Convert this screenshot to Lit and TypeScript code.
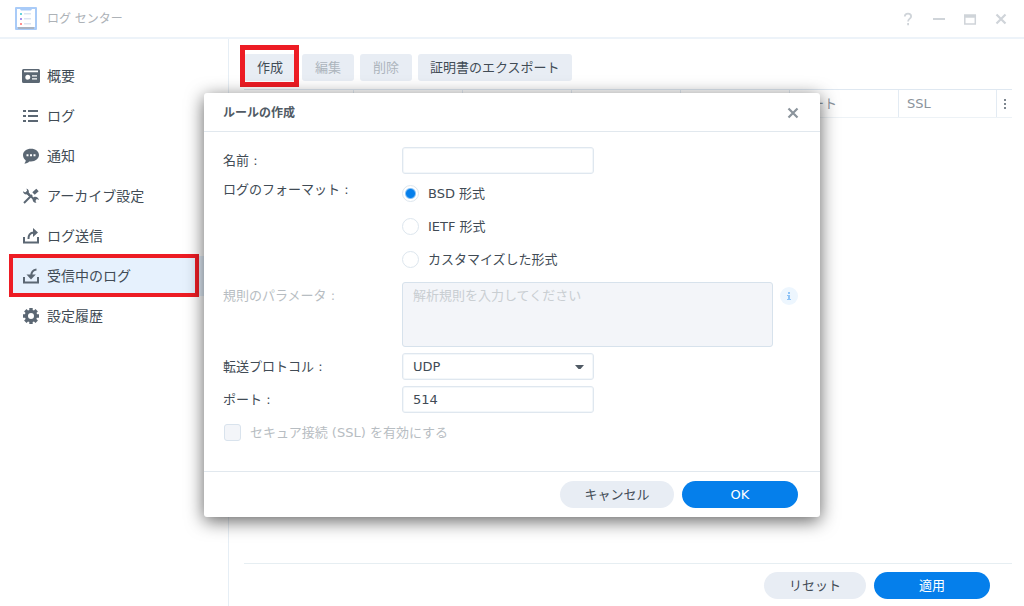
import { LitElement, html, css, svg, nothing } from "lit";
import { customElement, property, state } from "lit/decorators.js";
import { classMap } from "lit/directives/class-map.js";

const fontStack = css`"DejaVu Sans", "Noto Sans CJK JP", sans-serif`;

const buttonStyles = css`
  button,
  input,
  select,
  textarea {
    font-family: ${fontStack};
    font-size: 13px;
    color: #414b55;
    margin: 0;
    box-sizing: border-box;
  }
  .pill {
    height: 27px;
    border: 0;
    border-radius: 14px;
    padding: 0 24px;
    min-width: 114px;
    background: #e8edf4;
    line-height: 26px;
  }
  .pill.small {
    min-width: 102px;
  }
  .pill.primary {
    min-width: 116px;
    background: #057feb;
    color: #fff;
  }
  .icon-button {
    display: grid;
    place-items: center;
    border: 0;
    padding: 0;
    background: none;
    width: 16px;
    height: 16px;
  }
`;

const icons = {
  overview: svg`<path fill="#5b6773" fill-rule="evenodd" d="M1.5 1h15A1.5 1.5 0 0 1 18 2.500v11a1.500 1.500 0 0 1-1.500 1.500h-15A1.500 1.500 0 0 1 0 13.500v-11A1.500 1.500 0 0 1 1.500 1zM2 2.500v1.800h14V2.500zM5.800 6.700a2.500 2.500 0 1 0 0 5 2.500 2.500 0 0 0 0-5zM10 7.200v1.300h5V7.200zM10 10.200v1.300h5v-1.300z"/>`,
  list: svg`<path fill="#5b6773" d="M1 2h3v2H1zM6 2h10v2H6zM1 7h3v2H1zM6 7h10v2H6zM1 12h3v2H1zM6 12h10v2H6z"/>`,
  chat: svg`<path fill="#5b6773" d="M9 .8c4.500 0 8 2.700 8 6.300s-3.500 6.400-8 6.400l-1.800-.1C6 14.800 4.300 15.400 2.300 15.500c.9-.9 1.400-1.900 1.400-3.200C2 11.100 1 9.200 1 7.100 1 3.500 4.500.800 9 .800z"/><path fill="#fff" d="M4.500 6.200h2v2h-2zM8 6.200h2v2H8zM11.500 6.200h2v2h-2z"/>`,
  tools: svg`<g fill="none" stroke="#5b6773"><path stroke-width="2" d="M4 4 13.500 12.500"/><path stroke-width="2" d="m2 15 8-8"/><path stroke-width="3.600" d="m11.500 5.500 4-3.500"/></g><path fill="#5b6773" d="M4.500.4C6.600 1 7.200 3 6.800 4.600L8.500 6.500 6.800 8.200 5 6.300C3 6.700 1 5.500 1 3.200l2.300 1.300 1.800-1.500zM10.500 10.500l2-1.700c2.200-.3 4.300 1 4.400 3.200l-2-1-1.700 1.600 1.200 2.200c-2.400.3-4-1.500-3.900-4.300z"/>`,
  send: svg`<g fill="none" stroke="#5b6773" stroke-width="2"><path d="M2 9v5.500h14V9"/><path d="M6.500 11C6.300 7 8 4.600 12 4.500"/></g><path fill="#5b6773" d="m11 0 5 4.500L11 9z"/>`,
  receive: svg`<g fill="none" stroke="#5b6773" stroke-width="2"><path d="M2 9v5.500h14V9"/><path d="M14.500 1.500C11 1.800 9.300 4 9.200 8"/></g><path fill="#5b6773" d="M4.500 6.500h9.300L9 11.500z"/>`,
  gear: svg`<circle cx="9" cy="8" r="4.600" fill="none" stroke="#5b6773" stroke-width="3.200"/><path stroke="#5b6773" stroke-width="3.400" d="M9 0v2.800M9 13.200V16M1 8h2.800M14.200 8H17M3.300 2.300l2 2M12.700 11.700l2 2M14.700 2.300l-2 2M5.300 11.700l-2 2"/>`,
};

type IconName = keyof typeof icons;

interface NavEntry {
  id: string;
  label: string;
  icon: IconName;
}

const NAV: NavEntry[] = [
  { id: "overview", label: "概要", icon: "overview" },
  { id: "logs", label: "ログ", icon: "list" },
  { id: "notify", label: "通知", icon: "chat" },
  { id: "archive", label: "アーカイブ設定", icon: "tools" },
  { id: "send", label: "ログ送信", icon: "send" },
  { id: "receive", label: "受信中のログ", icon: "receive" },
  { id: "history", label: "設定履歴", icon: "gear" },
];

@customElement("side-nav")
class SideNav extends LitElement {
  @property() selected = "receive";

  static styles = css`
    :host {
      display: block;
      padding: 17px 12px;
      border-right: 1px solid #e6eef5;
      box-sizing: border-box;
    }
    .item {
      position: relative;
      display: flex;
      align-items: center;
      gap: 7px;
      height: 40px;
      padding-left: 10px;
      color: #414b55;
      font: 14px/20px ${fontStack};
      text-decoration: none;
    }
    .item.selected {
      background: #e6f1fd;
    }
    /* Highlight frame over the selected entry */
    .item.selected::after {
      content: "";
      position: absolute;
      inset: -2px 17px -1px -3px;
      border: 4px solid #ed1c24;
    }
    .icon {
      width: 18px;
      height: 16px;
      flex: none;
    }
  `;

  render() {
    return html`<nav>
      ${NAV.map(
        (n) => html`<a
          href="#${n.id}"
          class=${classMap({ item: true, selected: n.id === this.selected })}
        >
          <svg class="icon" viewBox="0 0 18 16">${icons[n.icon]}</svg>
          <span>${n.label}</span>
        </a>`
      )}
    </nav>`;
  }
}

@customElement("rule-dialog")
class RuleDialog extends LitElement {
  @state() private format = "bsd";

  static styles = [
    buttonStyles,
    css`
      :host {
        display: block;
        width: 616px;
        max-width: 100%;
        background: #fff;
        border-radius: 3px;
        box-shadow: 0 4px 18px rgba(0, 0, 0, 0.62);
        color: #414b55;
        font: 13px/20px ${fontStack};
      }
      .head {
        display: flex;
        align-items: center;
        justify-content: space-between;
        height: 36px;
        padding: 2px 19px 0;
        border-bottom: 1px solid #e1e8ee;
      }
      .title {
        margin: 0;
        font-size: 12px;
        font-weight: 700;
        color: #505a64;
      }
      .body {
        display: grid;
        gap: 6px;
        padding: 15px 19px 25px;
      }
      .row {
        display: grid;
        grid-template-columns: 179px 1fr;
        min-height: 27px;
        align-items: start;
      }
      .row.middle {
        align-items: center;
      }
      .off {
        color: #b7bdc2;
      }
      .field {
        width: 192px;
        height: 27px;
        padding: 0 10px;
        border: 1px solid #dfe7ef;
        border-radius: 3px;
        background: #fff;
        outline: 0;
        box-shadow: inset 0 0 0 1px #f3f7fa;
      }
      .select {
        position: relative;
        width: 192px;
        display: block;
        height: 27px;
      }
      .select .field {
        appearance: none;
      }
      .arrow {
        position: absolute;
        right: 10px;
        top: 12px;
        width: 9px;
        height: 5px;
        pointer-events: none;
      }
      .radios {
        display: grid;
        gap: 6px;
      }
      .option {
        display: flex;
        align-items: center;
        gap: 9px;
        height: 27px;
      }
      .radio {
        appearance: none;
        width: 17px;
        height: 17px;
        border: 1px solid #dde6ee;
        border-radius: 50%;
        background: #fff;
        flex: none;
      }
      .radio:checked {
        background: radial-gradient(circle, #057feb 4px, #fff 6px);
      }
      .check {
        appearance: none;
        width: 17px;
        height: 17px;
        margin-left: 1px;
        border: 1px solid #d9e3ed;
        border-radius: 3px;
        background: #f3f5f9;
        flex: none;
      }
      .area-wrap {
        display: flex;
        align-items: flex-start;
        gap: 7px;
      }
      .rule {
        padding-top: 3px;
      }
      .rule label {
        padding-top: 4px;
      }
      .area {
        flex: 1;
        max-width: 371px;
        height: 65px;
        padding: 3px 10px;
        border: 1px solid #d7e2ec;
        border-radius: 3px;
        background: #f3f5f9;
        line-height: 20px;
        resize: none;
      }
      .area::placeholder {
        color: #c9ced2;
        opacity: 1;
      }
      .info {
        width: 18px;
        height: 18px;
        margin-top: 5px;
        flex: none;
      }
      .foot {
        display: flex;
        justify-content: flex-end;
        gap: 8px;
        padding: 9px 22px;
        border-top: 1px solid #e1e8ee;
      }
    `,
  ];

  private radio(value: string, label: string) {
    return html`<label class="option">
      <input
        class="radio"
        type="radio"
        name="format"
        .checked=${this.format === value}
        @change=${() => (this.format = value)}
      />${label}
    </label>`;
  }

  render() {
    return html`
      <div class="head">
        <h2 class="title">ルールの作成</h2>
        <button class="icon-button" type="button">
          <svg width="12" height="12" viewBox="0 0 12 12">
            <path d="m1.500 1.500 9 9m0-9-9 9" stroke="#8b949c" stroke-width="2.200" />
          </svg>
        </button>
      </div>
      <div class="body">
        <div class="row middle">
          <label for="name">名前 :</label>
          <input class="field" id="name" type="text" />
        </div>
        <div class="row">
          <span id="fmt">ログのフォーマット :</span>
          <div class="radios" role="radiogroup" aria-labelledby="fmt">
            ${this.radio("bsd", "BSD 形式")} ${this.radio("ietf", "IETF 形式")}
            ${this.radio("custom", "カスタマイズした形式")}
          </div>
        </div>
        <div class="row rule">
          <label class="off" for="rule">規則のパラメータ :</label>
          <div class="area-wrap">
            <textarea
              class="area"
              id="rule"
              disabled
              placeholder="解析規則を入力してください"
            ></textarea>
            <svg class="info" viewBox="0 0 18 18">
              <circle cx="9" cy="9" r="9" fill="#edf6fe" />
              <path fill="#8fc4f7" d="M8 5h2v2H8zM7 8h3v4h1v1H7v-1h1V9H7z" />
            </svg>
          </div>
        </div>
        <div class="row middle">
          <label for="proto">転送プロトコル :</label>
          <span class="select">
            <select class="field" id="proto">
              <option>UDP</option>
            </select>
            <svg class="arrow" viewBox="0 0 9 5"><path fill="#505a64" d="M0 0h9L5.500 4h-2z" /></svg>
          </span>
        </div>
        <div class="row middle">
          <label for="port">ポート :</label>
          <input class="field" id="port" type="text" value="514" />
        </div>
        <label class="option off">
          <input class="check" type="checkbox" disabled />セキュア接続 (SSL) を有効にする
        </label>
      </div>
      <div class="foot">
        <button class="pill" type="button">キャンセル</button>
        <button class="pill primary" type="button">OK</button>
      </div>
    `;
  }
}

@customElement("app-root")
class AppRoot extends LitElement {
  static styles = [
    buttonStyles,
    css`
      :host {
        position: relative;
        display: grid;
        grid-template-rows: auto 1fr;
        min-height: 100vh;
        background: #fff;
        color: #414b55;
        font: 13px/20px ${fontStack};
      }
      .titlebar {
        display: flex;
        align-items: center;
        gap: 10px;
        height: 37px;
        padding: 0 15px;
        border-bottom: 2px solid #edf3f9;
      }
      .app-icon {
        width: 22px;
        height: 24px;
      }
      .app-title {
        flex: 1;
        margin: 0;
        font-size: 12px;
        font-weight: 400;
        color: #adb2b7;
      }
      .controls {
        display: flex;
        gap: 15px;
      }
      .content {
        display: grid;
        grid-template-columns: 229px 1fr;
      }
      .main {
        display: flex;
        flex-direction: column;
        padding: 15px 12px 7px 15px;
      }
      .toolbar {
        display: flex;
        gap: 6px;
        padding-bottom: 8px;
      }
      .tool {
        position: relative;
        height: 27px;
        min-width: 52px;
        padding: 0 12px;
        border: 0;
        border-radius: 3px;
        background: #e8edf4;
        line-height: 26px;
      }
      .tool:disabled {
        color: #adb5bd;
      }
      /* Highlight frame over the create button */
      .tool.marked::after {
        content: "";
        position: absolute;
        inset: -9px -3px -6px -4px;
        border: 5px solid #ed1c24;
      }
      .grid {
        width: 100%;
        table-layout: fixed;
        border-collapse: separate;
        border-spacing: 0;
        border-top: 1px solid #dfe8f1;
        border-bottom: 1px solid #edf2f6;
      }
      .grid th {
        height: 27px;
        padding: 0 8px;
        border-left: 1px solid #e3ebf3;
        box-sizing: border-box;
        font-weight: 400;
        text-align: left;
        color: #8b949c;
      }
      .grid th:first-child {
        border-left: 0;
      }
      .grid .last {
        width: 98px;
      }
      .grid .more {
        width: 16px;
        padding: 0 0 0 6px;
      }
      .more svg {
        display: block;
      }
      .actions {
        display: flex;
        justify-content: flex-end;
        gap: 8px;
        margin-top: auto;
        padding: 8px 22px 0 0;
        border-top: 1px solid #e6eef2;
      }
      .overlay {
        position: absolute;
        inset: 0;
        display: grid;
        place-items: center;
        padding-top: 4px;
      }
    `,
  ];

  render() {
    const glyph = (shape: unknown) => html`<button class="icon-button" type="button">
      <svg width="14" height="14" viewBox="0 0 14 14" fill="none" stroke="#cfd4d9">${shape}</svg>
    </button>`;
    const columns = ["", "", "", "", "", "ポート"];
    return html`
      <header class="titlebar">
        <svg class="app-icon" viewBox="0 0 22 24">
          <path fill="#a9cbf8" d="M1 0h20a1 1 0 0 1 1 1v21a1 1 0 0 1-1 1H1a1 1 0 0 1-1-1V1a1 1 0 0 1 1-1z" />
          <path fill="#fff" d="M2 2h3l1 1.500h10L17 2h3v18H2z" />
          <path fill="#aab4c2" d="M3 20h16v2H3z" />
          <path fill="#6bd3dc" d="M5 6h2v2H5z" />
          <path fill="#a792ee" d="M5 11h2v2H5z" />
          <path fill="#ff8f8f" d="M5 16h2v2H5z" />
          <path fill="#dce5f1" d="M9 6h7v1.500H9zM9 11h7v1.500H9zM9 16h7v1.500H9z" />
        </svg>
        <h1 class="app-title">ログ センター</h1>
        <div class="controls">
          ${glyph(svg`<path stroke-width="1.800" d="M3.800 4.500C3.900 2.600 5.100 1.700 7 1.700s3.100 1 3.100 2.700c0 2.200-3 2.400-3 5M7.100 11v2.200"/>`)}
          ${glyph(svg`<path stroke-width="2" d="M1 7h12"/>`)}
          ${glyph(svg`<path stroke-width="1.500" d="M1.800 3v9h10.500V3"/><path stroke-width="3.500" d="M1 4h12"/>`)}
          ${glyph(svg`<path stroke-width="2.200" d="m2.500 2.500 9 9m0-9-9 9"/>`)}
        </div>
      </header>
      <div class="content">
        <side-nav selected="receive"></side-nav>
        <main class="main">
          <div class="toolbar">
            <button class="tool marked" type="button">作成</button>
            <button class="tool" type="button" disabled>編集</button>
            <button class="tool" type="button" disabled>削除</button>
            <button class="tool" type="button">証明書のエクスポート</button>
          </div>
          <table class="grid">
            <thead>
              <tr>
                ${columns.map((c) => html`<th>${c || nothing}</th>`)}
                <th class="last">SSL</th>
                <th class="more">
                  <svg width="4" height="12" viewBox="0 0 4 12">
                    <path fill="#7d868f" d="M1 1h2v2H1zM1 5h2v2H1zM1 9h2v2H1z" />
                  </svg>
                </th>
              </tr>
            </thead>
          </table>
          <div class="actions">
            <button class="pill small" type="button">リセット</button>
            <button class="pill primary" type="button">適用</button>
          </div>
        </main>
      </div>
      <div class="overlay"><rule-dialog role="dialog"></rule-dialog></div>
    `;
  }
}
